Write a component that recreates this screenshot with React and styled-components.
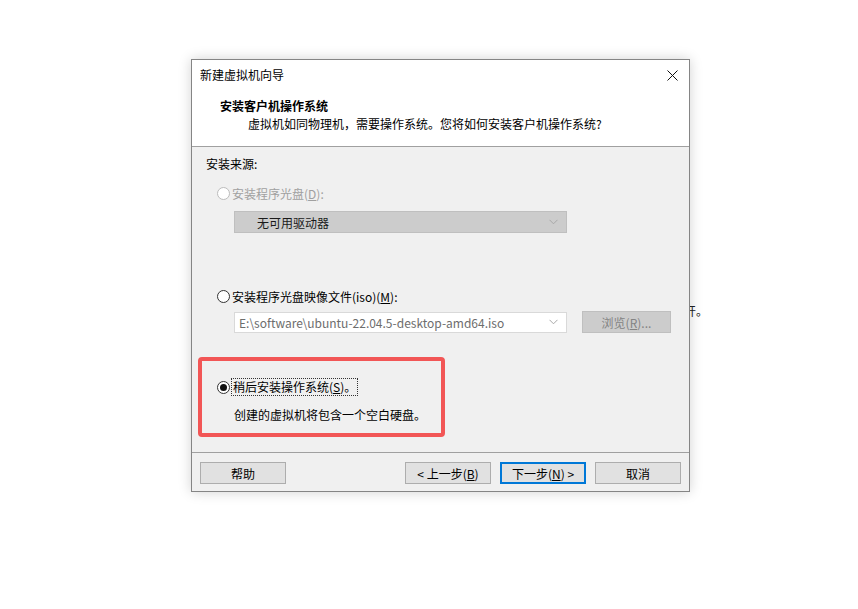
import React from 'react';
import styled, { createGlobalStyle } from 'styled-components';

const GlobalStyle = createGlobalStyle`
  html, body {
    margin: 0;
    background: #ffffff;
  }
  * {
    box-sizing: border-box;
  }
`;

const Page = styled.div`
  position: relative;
  width: 858px;
  height: 609px;
  padding: 59px 0 0 191px;
  font-family: "Noto Sans CJK SC", "Noto Sans", sans-serif;
  font-size: 12px;
  color: #000;
`;

// text of the window behind the dialog
const BehindText = styled.span`
  position: absolute;
  left: 684px;
  top: 302px;
  font-size: 12px;
  color: #222;
  z-index: 0;
`;

const Dialog = styled.div`
  position: relative;
  z-index: 1;
  width: 499px;
  border: 1px solid #858585;
  background: #f0f0f0;
  box-shadow: 0 0 12px rgba(0, 0, 0, 0.18);
  display: flex;
  flex-direction: column;
`;

const Header = styled.div`
  background: #ffffff;
  height: 87px;
  border-bottom: 1px solid #a0a0a0;
`;

const TitleBar = styled.div`
  height: 31px;
  display: flex;
  align-items: center;
  justify-content: space-between;
  padding: 0 10px 1px 8px;
  line-height: 16px;
`;

const CloseBtn = styled.div`
  width: 12px;
  height: 12px;
  display: flex;
  align-items: center;
  justify-content: center;
  margin-right: 1px;
`;

const Heading = styled.div`
  font-weight: bold;
  line-height: 18px;
  padding: 6px 0 0 28px;
`;

const SubTitle = styled.div`
  line-height: 18px;
  padding-left: 56px;
`;

const Body = styled.div`
  position: relative;
  height: 305px;
  padding: 8px 0 0 14px;
`;

const Label = styled.div`
  line-height: 18px;
`;

const RadioRow = styled.label`
  display: flex;
  align-items: center;
  gap: 2px;
  height: 18px;
  margin-left: 11px;
  margin-top: ${p => p.$top}px;
  color: ${p => (p.$disabled ? '#a0a0a0' : '#000')};
`;

const Circle = styled.span`
  width: 13px;
  height: 13px;
  border-radius: 50%;
  border: 1px solid ${p => (p.$disabled ? '#bcbcbc' : '#333')};
  background: #fff;
  display: flex;
  align-items: center;
  justify-content: center;
  &::after {
    content: '';
    display: ${p => (p.$checked ? 'block' : 'none')};
    width: 7px;
    height: 7px;
    border-radius: 50%;
    background: #111;
  }
`;

const Focus = styled.span`
  outline: 1px dotted #333;
  outline-offset: 0;
  padding: 0 1px;
  line-height: 16px;
`;

const U = styled.span`
  text-decoration: underline;
`;

const Row = styled.div`
  display: flex;
  align-items: center;
  gap: 15px;
  margin-left: 28px;
  margin-top: ${p => p.$top}px;
`;

const Combo = styled.div`
  width: 333px;
  height: ${p => (p.$disabled ? 22 : 21)}px;
  display: flex;
  align-items: center;
  justify-content: space-between;
  padding: 0 8px 0 ${p => (p.$disabled ? 22 : 4)}px;
  background: ${p => (p.$disabled ? '#cccccc' : '#ffffff')};
  border: 1px solid ${p => (p.$disabled ? '#bfbfbf' : '#d9d9d9')};
  color: ${p => (p.$disabled ? '#1a1a1a' : '#6d6d6d')};
  white-space: nowrap;
`;

const Button = styled.div`
  width: ${p => p.$width || 86}px;
  height: 22px;
  display: flex;
  align-items: center;
  justify-content: center;
  background: ${p => (p.$disabled ? '#cccccc' : '#e1e1e1')};
  border: ${p => (p.$primary ? '2px solid #0078d7' : p.$disabled ? '1px solid #bfbfbf' : '1px solid #adadad')};
  color: ${p => (p.$disabled ? '#838383' : '#000')};
  white-space: nowrap;
`;

const Note = styled.div`
  line-height: 18px;
  margin: 10px 0 0 28px;
`;

const Highlight = styled.div`
  position: absolute;
  left: 6px;
  top: 210px;
  width: 247px;
  height: 80px;
  border: 4px solid #f25656;
  border-radius: 4px;
  pointer-events: none;
`;

const Footer = styled.div`
  border-top: 1px solid #a0a0a0;
  height: 39px;
  display: flex;
  align-items: flex-start;
  padding: 9px 8px 0 8px;
  gap: 9px;
`;

const Spacer = styled.div`
  flex: 1;
`;

const Chevron = () => (
  <svg width="9" height="6" viewBox="0 0 9 6">
    <path d="M0.5 0.8 L4.5 4.8 L8.5 0.8" fill="none" stroke="#a8a8a8" strokeWidth="1" />
  </svg>
);

export default function App() {
  return (
    <Page>
      <GlobalStyle />
      <BehindText>开。</BehindText>
      <Dialog>
        <Header>
          <TitleBar>
            <span>新建虚拟机向导</span>
            <CloseBtn>
              <svg width="11" height="11" viewBox="0 0 11 11">
                <path d="M0.5 0.5 L10.5 10.5 M10.5 0.5 L0.5 10.5" stroke="#111" strokeWidth="1" />
              </svg>
            </CloseBtn>
          </TitleBar>
          <Heading>安装客户机操作系统</Heading>
          <SubTitle>虚拟机如同物理机，需要操作系统。您将如何安装客户机操作系统?</SubTitle>
        </Header>

        <Body>
          <Label>安装来源:</Label>

          <RadioRow $top={11} $disabled>
            <Circle $disabled />
            <span>安装程序光盘(<U>D</U>):</span>
          </RadioRow>
          <Row $top={9}>
            <Combo $disabled>
              <span>无可用驱动器</span>
              <Chevron />
            </Combo>
          </Row>

          <RadioRow $top={54}>
            <Circle />
            <span>安装程序光盘映像文件(iso)(<U>M</U>):</span>
          </RadioRow>
          <Row $top={6}>
            <Combo>
              <span>E:\software\ubuntu-22.04.5-desktop-amd64.iso</span>
              <Chevron />
            </Combo>
            <Button $disabled $width={89}>浏览(<U>R</U>)...</Button>
          </Row>

          <RadioRow $top={45}>
            <Circle $checked />
            <Focus>稍后安装操作系统(<U>S</U>)。</Focus>
          </RadioRow>
          <Note>创建的虚拟机将包含一个空白硬盘。</Note>

          <Highlight />
        </Body>

        <Footer>
          <Button>帮助</Button>
          <Spacer />
          <Button>&lt; 上一步(<U>B</U>)</Button>
          <Button $primary>下一步(<U>N</U>) &gt;</Button>
          <Button>取消</Button>
        </Footer>
      </Dialog>
    </Page>
  );
}
